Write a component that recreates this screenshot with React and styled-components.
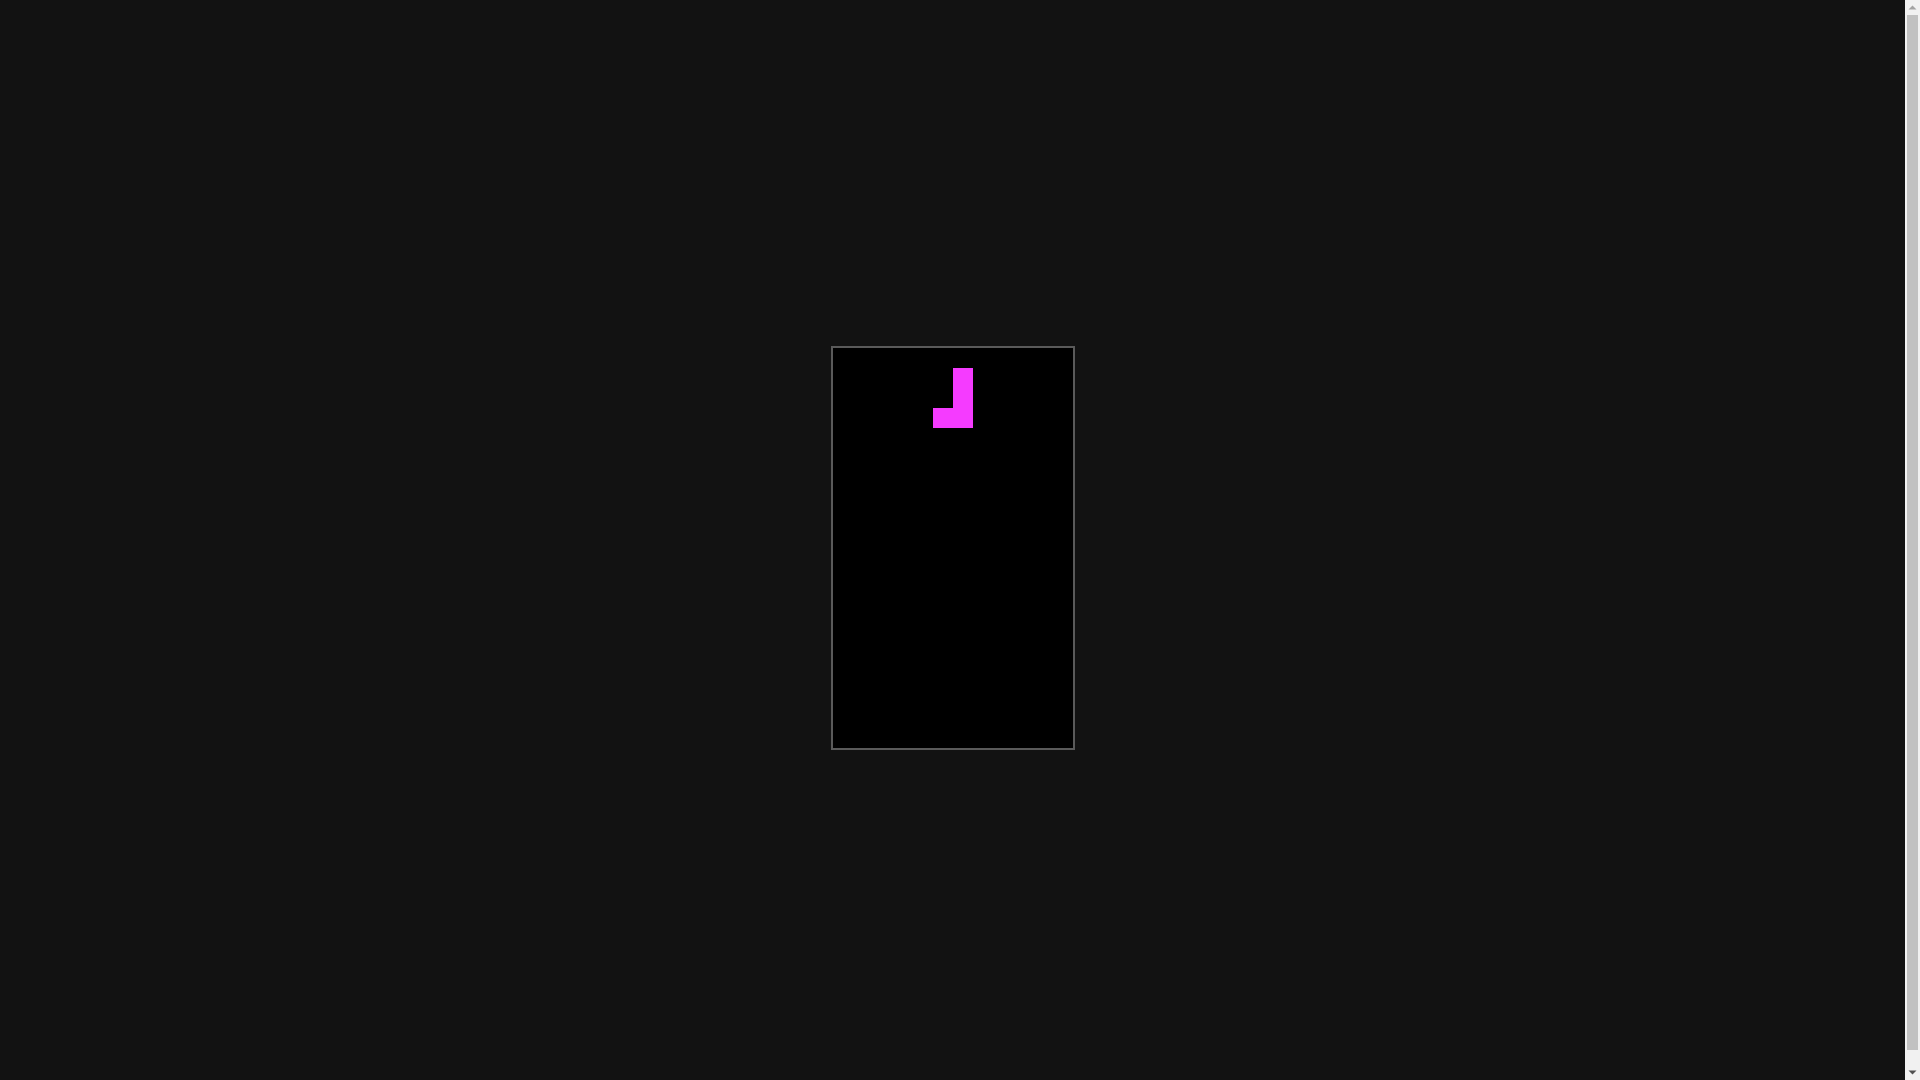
import React from "react"
import styled, { createGlobalStyle } from "styled-components"

const COLS = 12
const ROWS = 20
const CELL = 20

// current falling piece (J) in board coordinates
const piece = [
  [6, 1],
  [6, 2],
  [5, 3],
  [6, 3],
]

const GlobalStyle = createGlobalStyle`
  html, body {
    margin: 0;
    background-color: #121212;
    font-family: "Liberation Sans", Arial, sans-serif;
  }
`

const Page = styled.div`
  display: flex;
  align-items: flex-start;
  height: 100vh;
  overflow: hidden;
`

const Screen = styled.main`
  flex: 1;
  margin: 8px;
  height: 100vh;
  display: flex;
  align-items: center;
  justify-content: center;
`

const Board = styled.div`
  display: grid;
  grid-template-columns: repeat(${COLS}, ${CELL}px);
  grid-template-rows: repeat(${ROWS}, ${CELL}px);
  background-color: #000;
  border: 2px solid #5a5a5a;
`

const Cell = styled.div`
  background-color: ${(p) => (p.$filled ? "#f53bff" : "transparent")};
`

const ScrollTrack = styled.aside`
  width: 15px;
  height: 100vh;
  flex-shrink: 0;
  display: flex;
  flex-direction: column;
  background-color: #f1f1f1;
`

const ScrollButton = styled.div`
  height: 15px;
  display: flex;
  align-items: center;
  justify-content: center;
`

const ScrollThumb = styled.div`
  margin: 0 2px;
  height: 1035px;
  background-color: #c1c1c1;
`

const Spacer = styled.div`
  flex: 1;
`

const Arrow = ({ up, color }) => (
  <svg width="15" height="15" viewBox="0 0 15 15">
    <polygon
      points={up ? "3.5,9.5 7.5,5.5 11.5,9.5" : "3.5,5.5 7.5,9.5 11.5,5.5"}
      fill={color}
    />
  </svg>
)

const App = () => {
  const filled = new Set(piece.map(([x, y]) => `${x}-${y}`))
  const cells = []
  for (let y = 0; y < ROWS; y++) {
    for (let x = 0; x < COLS; x++) {
      cells.push(<Cell key={`${x}-${y}`} $filled={filled.has(`${x}-${y}`)} />)
    }
  }
  return (
    <>
      <GlobalStyle />
      <Page>
        <Screen>
          <Board>{cells}</Board>
        </Screen>
        <ScrollTrack>
          <ScrollButton>
            <Arrow up color="#a3a3a3" />
          </ScrollButton>
          <ScrollThumb />
          <Spacer />
          <ScrollButton>
            <Arrow color="#505050" />
          </ScrollButton>
        </ScrollTrack>
      </Page>
    </>
  )
}

export default App
